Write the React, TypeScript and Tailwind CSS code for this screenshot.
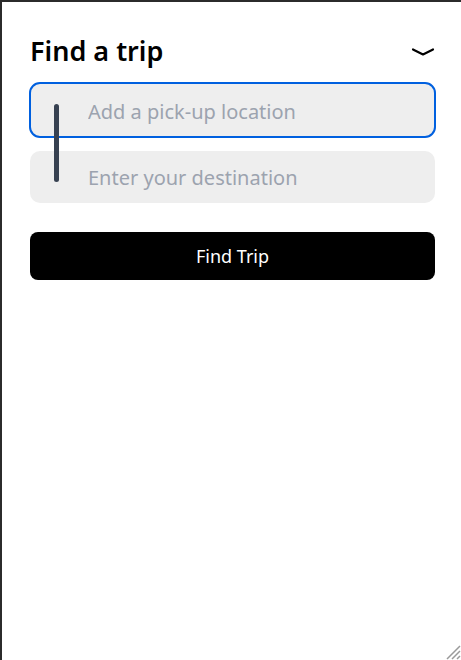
import { useState } from 'react';

function Chevron() {
  return (
    <svg width="24" height="10" viewBox="0 0 24 10" fill="none" className="block">
      <path d="M2 2.5 L12 7.5 L22 2.5" stroke="#000" strokeWidth="2.2" strokeLinecap="round" strokeLinejoin="round" />
    </svg>
  );
}

function Grabber() {
  return (
    <svg width="18" height="18" viewBox="0 0 18 18" className="absolute right-0 bottom-0">
      <path d="M17 4 L4 17 M17 9 L9 17 M17 14 L14 17" stroke="#9a9a9a" strokeWidth="1.5" />
    </svg>
  );
}

export default function App() {
  const [pickup, setPickup] = useState('');
  const [dest, setDest] = useState('');

  return (
    <div
      className="relative w-[461px] h-[660px] border-t-2 border-l-2 border-[#2b2b2b] bg-white overflow-hidden"
      style={{ fontFamily: '"Noto Sans", "Open Sans", sans-serif' }}
    >
      <div className="pl-[28px] pr-[26px] pt-[31px]">
        <div className="flex items-center justify-between h-[36px]">
          <h1 className="text-[27px] font-semibold text-black leading-9">Find a trip</h1>
          <button className="mt-[2px]">
            <Chevron />
          </button>
        </div>

        <div className="relative mt-[14px]">
          <input
            autoFocus
            value={pickup}
            onChange={(e) => setPickup(e.target.value)}
            placeholder="Add a pick-up location"
            className="w-full h-[54px] rounded-[10px] bg-[#eeeeee] pl-[58px] pt-[2px] text-[20px] text-black placeholder:text-[#9ca3af] outline-2 outline-[#0060df] -outline-offset-1 caret-black"
          />
          <input
            value={dest}
            onChange={(e) => setDest(e.target.value)}
            placeholder="Enter your destination"
            className="w-full h-[52px] mt-[14px] rounded-[10px] bg-[#eeeeee] pl-[58px] text-[20px] text-black placeholder:text-[#9ca3af] outline-none"
          />
          <div className="absolute left-[24px] top-[21px] w-[5px] h-[78px] rounded-full bg-[#374151]" />
        </div>

        <button className="w-full h-[48px] mt-[29px] rounded-[8px] bg-black text-white text-[18px]">
          Find Trip
        </button>
      </div>
      <Grabber />
    </div>
  );
}
